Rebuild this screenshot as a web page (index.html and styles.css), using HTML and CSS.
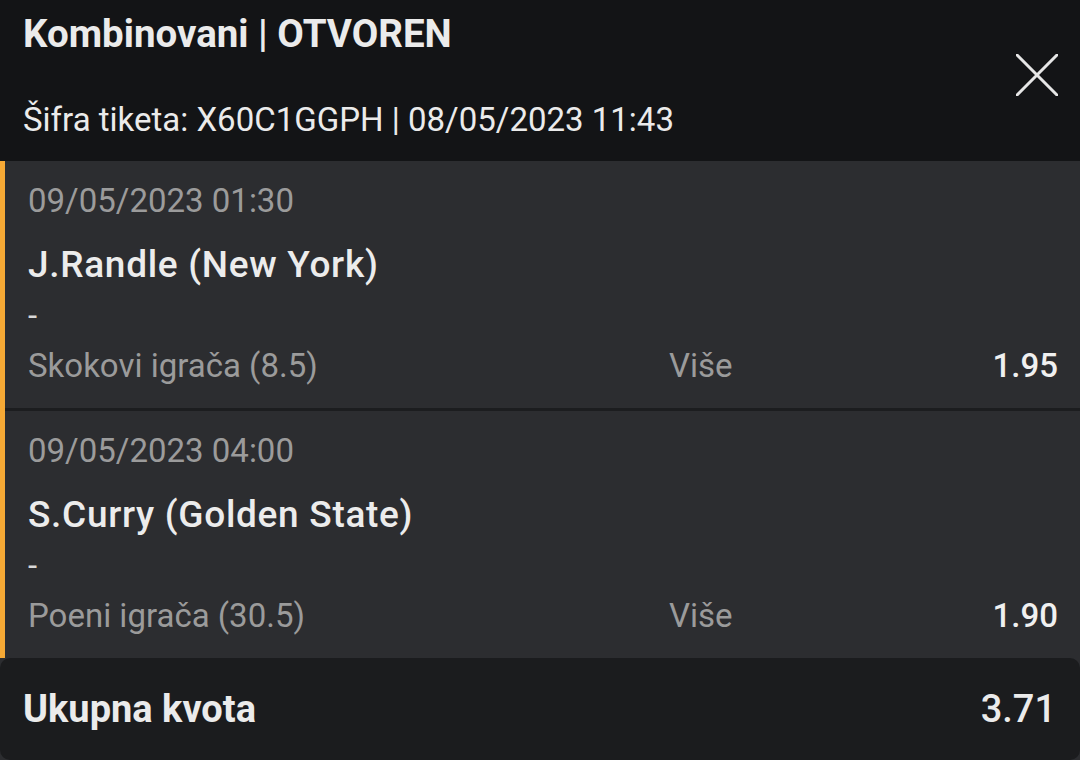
FILE: index.html
```html
<!DOCTYPE html>
<html lang="sr">
<head>
<meta charset="utf-8">
<title>Tiket</title>
<link rel="stylesheet" href="styles.css">
</head>
<body>
<div class="ticket">
  <header class="head">
    <div class="head-text">
      <div class="title">Kombinovani | OTVOREN</div>
      <div class="code">Šifra tiketa: X60C1GGPH | 08/05/2023 11:43</div>
    </div>
    <button class="close" aria-label="Zatvori">
      <svg width="42" height="42" viewBox="0 0 42 42"><path d="M1 1 L41 41 M41 1 L1 41" stroke="#e6e6e6" stroke-width="3" stroke-linecap="round" fill="none"/></svg>
    </button>
  </header>
  <section class="events">
    <div class="event">
      <div class="date">09/05/2023 01:30</div>
      <div class="name">J.Randle (New York)</div>
      <div class="dash">-</div>
      <div class="bet">
        <span class="market">Skokovi igrača (8.5)</span>
        <span class="pick">Više</span>
        <span class="odd">1.95</span>
      </div>
    </div>
    <div class="event">
      <div class="date">09/05/2023 04:00</div>
      <div class="name">S.Curry (Golden State)</div>
      <div class="dash">-</div>
      <div class="bet">
        <span class="market">Poeni igrača (30.5)</span>
        <span class="pick">Više</span>
        <span class="odd">1.90</span>
      </div>
    </div>
  </section>
  <footer class="total">
    <span class="total-label">Ukupna kvota</span>
    <span class="total-value">3.71</span>
  </footer>
</div>
</body>
</html>
```
FILE: styles.css
```css
html, body {
  margin: 0;
  padding: 0;
}
body {
  background: #2c2d30;
  font-family: Roboto, "Liberation Sans", sans-serif;
  width: 1080px;
  height: 760px;
  overflow: hidden;
}
.ticket {
  display: flex;
  flex-direction: column;
  height: 760px;
}
.head {
  background: #131416;
  height: 161px;
  box-sizing: border-box;
  display: flex;
  justify-content: space-between;
  align-items: flex-start;
  padding: 12px 22px 0 23px;
}
.title {
  font-size: 38.5px;
  line-height: 44px;
  font-weight: 700;
  color: #ebebeb;
}
.code {
  margin-top: 44px;
  font-size: 33px;
  line-height: 40px;
  color: #ebebeb;
}
.close {
  background: none;
  border: 0;
  padding: 0;
  margin-top: 42px;
  width: 42px;
  height: 42px;
  display: block;
}
.close svg {
  display: block;
}
.events {
  display: flex;
  flex-direction: column;
  gap: 3px;
  background: #1c1d1f;
  border-left: 5px solid #f6a935;
}
.event {
  background: #2c2d30;
  height: 247px;
  box-sizing: border-box;
  padding: 20px 22px 0 23px;
  display: flex;
  flex-direction: column;
}
.date {
  font-size: 33px;
  line-height: 40px;
  color: #9b9b9b;
}
.name {
  margin-top: 22px;
  font-size: 37px;
  line-height: 44px;
  font-weight: 500;
  letter-spacing: 0.7px;
  color: #ececec;
}
.dash {
  margin-top: 9px;
  font-size: 33px;
  line-height: 40px;
  color: #d8d8d8;
}
.bet {
  margin-top: 10px;
  display: grid;
  grid-template-columns: 641px 1fr auto;
  font-size: 33px;
  line-height: 40px;
  color: #9b9b9b;
}
.odd {
  color: #f0f0f0;
  font-weight: 500;
  text-align: right;
}
.total {
  flex: 1;
  background: #1b1c1e;
  border-radius: 10px;
  display: flex;
  justify-content: space-between;
  align-items: center;
  padding: 0 24px 0 23px;
}
.total-label {
  font-size: 38px;
  line-height: 46px;
  font-weight: 700;
  color: #ebebeb;
}
.total-value {
  font-size: 38px;
  line-height: 46px;
  font-weight: 500;
  color: #ebebeb;
}
```
